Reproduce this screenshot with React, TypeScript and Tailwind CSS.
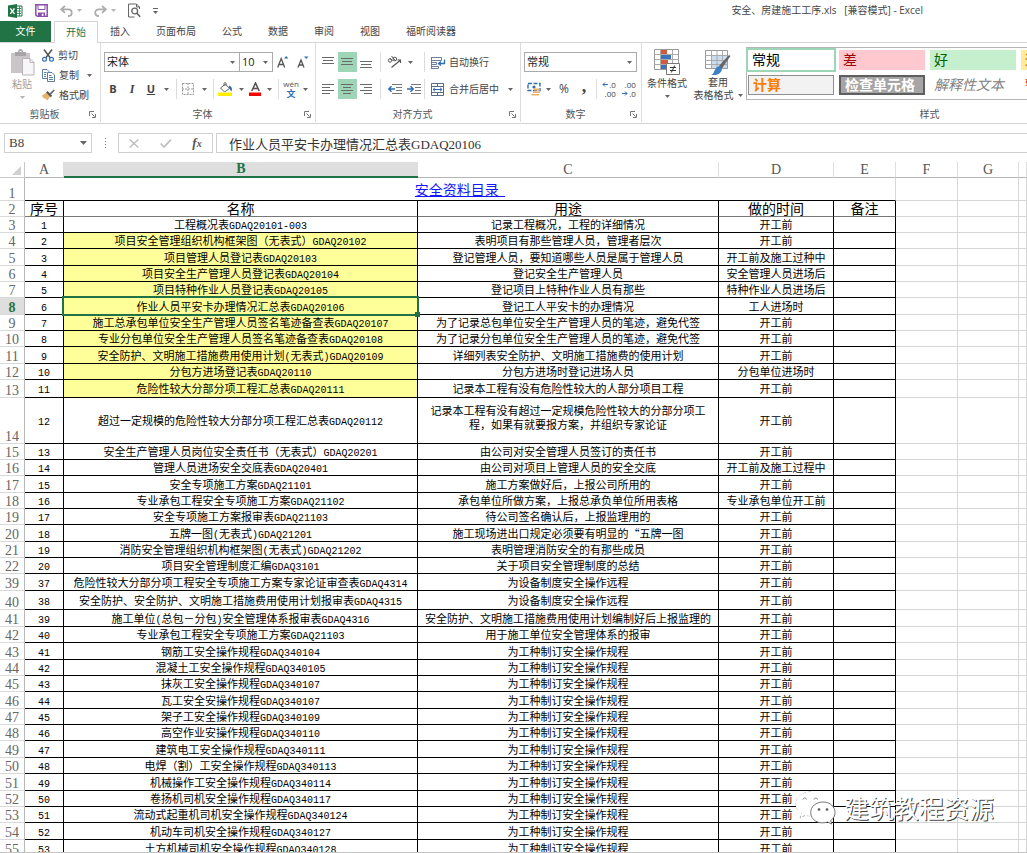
import React from "react";

type Purpose = string | string[];
type Row = {
  n: number;
  h: "a" | "b" | "c" | "d" | "e";
  no: string;
  name: string;
  use: Purpose;
  time: string;
  mark?: boolean;
};

const HEIGHTS = {
  a: "h-[16px]",
  b: "h-[17px]",
  c: "h-[18px]",
  d: "h-[46px]",
  e: "h-[19px]",
};

const CRAFT = "为工种制订安全操作规程";

const ROWS: Row[] = [
  { n: 3, h: "a", no: "1", name: "工程概况表GDAQ20101-003", use: "记录工程概况，工程的详细情况", time: "开工前" },
  { n: 4, h: "a", no: "2", name: "项目安全管理组织机构框架图（无表式）GDAQ20102", use: "表明项目有那些管理人员，管理者层次", time: "开工前", mark: true },
  { n: 5, h: "b", no: "3", name: "项目管理人员登记表GDAQ20103", use: "登记管理人员，要知道哪些人员是属于管理人员", time: "开工前及施工过种中", mark: true },
  { n: 6, h: "a", no: "4", name: "项目安全生产管理人员登记表GDAQ20104", use: "登记安全生产管理人员", time: "安全管理人员进场后", mark: true },
  { n: 7, h: "a", no: "5", name: "项目特种作业人员登记表GDAQ20105", use: "登记项目上特种作业人员有那些", time: "特种作业人员进场后", mark: true },
  { n: 8, h: "b", no: "6", name: "作业人员平安卡办理情况汇总表GDAQ20106", use: "登记工人平安卡的办理情况", time: "工人进场时", mark: true },
  { n: 9, h: "a", no: "7", name: "施工总承包单位安全生产管理人员签名笔迹备查表GDAQ20107", use: "为了记录总包单位安全生产管理人员的笔迹，避免代签", time: "开工前", mark: true },
  { n: 10, h: "a", no: "8", name: "专业分包单位安全生产管理人员签名笔迹备查表GDAQ20108", use: "为了记录分包单位安全生产管理人员的笔迹，避免代签", time: "开工前", mark: true },
  { n: 11, h: "b", no: "9", name: "安全防护、文明施工措施费用使用计划(无表式)GDAQ20109", use: "详细列表安全防护、文明施工措施费的使用计划", time: "开工前", mark: true },
  { n: 12, h: "a", no: "10", name: "分包方进场登记表GDAQ20110", use: "分包方进场时登记进场人员", time: "分包单位进场时", mark: true },
  { n: 13, h: "c", no: "11", name: "危险性较大分部分项工程汇总表GDAQ20111", use: "记录本工程有没有危险性较大的人部分项目工程", time: "开工前", mark: true },
  { n: 14, h: "d", no: "12", name: "超过一定规模的危险性较大分部分项工程汇总表GDAQ20112", use: ["记录本工程有没有超过一定规模危险性较大的分部分项工", "程，如果有就要报方案，并组织专家论证"], time: "开工前" },
  { n: 15, h: "a", no: "13", name: "安全生产管理人员岗位安全责任书（无表式）GDAQ20201", use: "由公司对安全管理人员签订的责任书", time: "开工前" },
  { n: 16, h: "a", no: "14", name: "管理人员进场安全交底表GDAQ20401", use: "由公司对项目上管理人员的安全交底", time: "开工前及施工过程中" },
  { n: 17, h: "b", no: "15", name: "安全专项施工方案GDAQ21101", use: "施工方案做好后，上报公司所用的", time: "开工前" },
  { n: 18, h: "a", no: "16", name: "专业承包工程安全专项施工方案GDAQ21102", use: "承包单位所做方案，上报总承负单位所用表格", time: "专业承包单位开工前" },
  { n: 19, h: "a", no: "17", name: "安全专项施工方案报审表GDAQ21103", use: "待公司签名确认后，上报监理用的", time: "开工前" },
  { n: 20, h: "b", no: "18", name: "五牌一图(无表式)GDAQ21201", use: "施工现场进出口规定必须要有明显的“五牌一图", time: "开工前" },
  { n: 21, h: "a", no: "19", name: "消防安全管理组织机构框架图(无表式)GDAQ21202", use: "表明管理消防安全的有那些成员", time: "开工前" },
  { n: 22, h: "a", no: "20", name: "项目安全管理制度汇编GDAQ3101", use: "关于项目安全管理制度的总结", time: "开工前" },
  { n: 39, h: "b", no: "37", name: "危险性较大分部分项工程安全专项施工方案专家论证审查表GDAQ4314", use: "为设备制度安全操作远程", time: "开工前" },
  { n: 40, h: "e", no: "38", name: "安全防护、安全防护、文明施工措施费用使用计划报审表GDAQ4315", use: "为设备制度安全操作远程", time: "开工前" },
  { n: 41, h: "b", no: "39", name: "施工单位(总包－分包)安全管理体系报审表GDAQ4316", use: "安全防护、文明施工措施费用使用计划编制好后上报监理的", time: "开工前" },
  { n: 42, h: "a", no: "40", name: "专业承包工程安全专项施工方案GDAQ21103", use: "用于施工单位安全管理体系的报审", time: "开工前" },
  { n: 43, h: "b", no: "41", name: "钢筋工安全操作规程GDAQ340104", use: CRAFT, time: "开工前" },
  { n: 44, h: "a", no: "42", name: "混凝土工安全操作规程GDAQ340105", use: CRAFT, time: "开工前" },
  { n: 45, h: "a", no: "43", name: "抹灰工安全操作规程GDAQ340107", use: CRAFT, time: "开工前" },
  { n: 46, h: "b", no: "44", name: "瓦工安全安操作规程GDAQ340107", use: CRAFT, time: "开工前" },
  { n: 47, h: "a", no: "45", name: "架子工安全操作规程GDAQ340109", use: CRAFT, time: "开工前" },
  { n: 48, h: "a", no: "46", name: "高空作业安操作规程GDAQ340110", use: CRAFT, time: "开工前" },
  { n: 49, h: "b", no: "47", name: "建筑电工安全操作规程GDAQ340111", use: CRAFT, time: "开工前" },
  { n: 50, h: "a", no: "48", name: "电焊（割）工安全操作规程GDAQ340113", use: CRAFT, time: "开工前" },
  { n: 51, h: "b", no: "49", name: "机械操作工安全操作规程GDAQ340114", use: CRAFT, time: "开工前" },
  { n: 52, h: "a", no: "50", name: "卷扬机司机安全操作规程GDAQ340117", use: CRAFT, time: "开工前" },
  { n: 53, h: "a", no: "51", name: "流动式起重机司机安全操作规程GDAQ340124", use: CRAFT, time: "开工前" },
  { n: 54, h: "b", no: "52", name: "机动车司机安全操作规程GDAQ340127", use: CRAFT, time: "开工前" },
  { n: 55, h: "b", no: "53", name: "土方机械司机安全操作规程GDAQ340128", use: CRAFT, time: "开工前" },
];

/* Latin runs are set in a narrower monospaced face than the Chinese text. */
function Mixed({ text }: { text: string }) {
  return (
    <>
      {text.split(/([\x21-\x7e]+)/).map((part, i) =>
        i % 2 ? (
          <span key={i} className="font-['Liberation_Mono',monospace] text-[10px] leading-none">{part}</span>
        ) : (
          part
        ),
      )}
    </>
  );
}

function Caret({ faint }: { faint?: boolean }) {
  return (
    <svg width="5" height="3" viewBox="0 0 5 3" className={faint ? "shrink-0 text-[#b5b5b5]" : "shrink-0 text-[#666]"}>
      <path d="M0 0h5L2.5 3z" fill="currentColor" />
    </svg>
  );
}

function Divider() {
  return <span className="block h-5 w-px shrink-0 bg-[#dcdcdc]" />;
}

function IconButton({ label, width, active, children }: { label: string; width: string; active?: boolean; children: React.ReactNode }) {
  return (
    <button aria-label={label} className={`flex h-5 shrink-0 items-center justify-center ${width} ${active ? "bg-[#9fd5b7]" : ""}`}>
      {children}
    </button>
  );
}

function Group({ title, width, launcher = true, children }: { title: string; width: string; launcher?: boolean; children: React.ReactNode }) {
  return (
    <section aria-label={title} className={`flex shrink-0 flex-col border-r border-[#dcdcdc] ${width}`}>
      <div className="flex-1">{children}</div>
      <div className="flex h-4 items-center pr-1">
        <span className="flex-1 text-center leading-4 text-[#555]">{title}</span>
        {launcher && (
          <button aria-label={`${title}设置`}>
            <svg width="7" height="7" viewBox="0 0 7 7" fill="none" stroke="#777">
              <path d="M.5 5V.5H5M2.5 2.5l3 3M6.5 3v3.5H3" />
            </svg>
          </button>
        )}
      </div>
    </section>
  );
}

function Lines({ rows }: { rows: [number, number, number][] }) {
  return (
    <svg width="13" height="14" viewBox="0 0 13 14" stroke="#6a6a6a">
      {rows.map(([y, x1, x2]) => (
        <path key={y} d={`M${x1} ${y + 0.5}H${x2}`} />
      ))}
    </svg>
  );
}

function QuickAccess() {
  return (
    <div className="flex items-center">
      <svg width="15" height="14" viewBox="0 0 15 14" className="mr-3">
        <path d="M8 2h6v10H8z" fill="#fff" stroke="#217346" />
        <path d="M9 4.5h4M9 7h4M9 9.5h4M11.5 2v10" stroke="#217346" strokeWidth=".8" />
        <path d="M0 1.5 9 0v14L0 12.500z" fill="#217346" />
        <path d="M2.300 4.300 6.500 9.800M6.500 4.300 2.300 9.800" stroke="#fff" strokeWidth="1.4" />
      </svg>
      <button aria-label="保存" className="mr-3">
        <svg width="13" height="13" viewBox="0 0 13 13">
          <path d="M.8.8h11.400v11.400H2.300L.8 10.800z" fill="#fff" stroke="#8a4fae" strokeWidth="1.500" />
          <path d="M3 1h7v4.500H3z" fill="#fff" stroke="#8a4fae" />
          <path d="M3 8.500h7V12H3z" fill="#8a4fae" />
          <path d="M6.800 9.700h1.700V12H6.800z" fill="#fff" />
        </svg>
      </button>
      <button aria-label="撤消" className="mr-3 flex items-center gap-1">
        <svg width="13" height="12" viewBox="0 0 13 12" fill="none" stroke="#ababab" strokeWidth="1.800">
          <path d="M5 .8 1.200 4.300 5 7.800M1.500 4.300H8c5 0 5 6.700 0 6.700" />
        </svg>
        <Caret faint />
      </button>
      <button aria-label="恢复" className="mr-3 flex items-center gap-1">
        <svg width="13" height="12" viewBox="0 0 13 12" fill="none" stroke="#ababab" strokeWidth="1.800">
          <path d="M8 .8l3.800 3.500L8 7.800M11.500 4.300H5C0 4.300 0 11 5 11" />
        </svg>
        <Caret faint />
      </button>
      <button aria-label="打印预览" className="mr-3">
        <svg width="13" height="15" viewBox="0 0 13 15" fill="none" stroke="#666">
          <path d="M11.500 6V4L8.500 1h-8v13h6M8.500 1v3h3" />
          <circle cx="6.700" cy="8" r="2.900" strokeWidth="1.300" />
          <path d="m8.900 10.200 3.300 3.600" strokeWidth="1.700" />
        </svg>
      </button>
      <button aria-label="自定义快速访问工具栏" className="flex flex-col items-center gap-0.5">
        <span className="h-px w-[5px] bg-[#666]" />
        <Caret />
      </button>
    </div>
  );
}

function SelectBox({ id, label, value, width }: { id: string; label: string; value: string; width: string }) {
  return (
    <div className={`relative h-5 border border-[#ababab] ${width}`}>
      <label htmlFor={id} className="sr-only">{label}</label>
      <select id={id} className="block h-full w-full appearance-none bg-white pl-0.5 text-[11px] leading-[18px] text-[#222] outline-none">
        <option>{value}</option>
      </select>
      <span className="pointer-events-none absolute inset-y-0 right-1 flex items-center"><Caret /></span>
    </div>
  );
}

function Clipboard() {
  return (
    <Group title="剪贴板" width="w-[101px]">
      <div className="flex pl-1.5 pt-0.5">
        <button className="flex w-8 flex-col items-center pt-1 text-[#9c9c9c]">
          <svg width="25" height="27" viewBox="0 0 25 27">
            <path d="M1 4h19v20H1z" fill="#c9c5c9" />
            <path d="M5 3h3c0-4 5-4 5 0h3v4H5z" fill="#a8a4a8" />
            <path d="M9.500 2.500h2" stroke="#fff" />
            <path d="M12.500 9.500h7.500l4 4v12.500H12.500z" fill="#f8f6f8" stroke="#b8b4b8" />
            <path d="M20 9.500v4h4" fill="none" stroke="#b8b4b8" />
          </svg>
          <span className="leading-4">粘贴</span>
          <span className="mt-1"><Caret faint /></span>
        </button>
        <div className="flex flex-col pl-1">
          <button className="flex h-5 items-center gap-1">
            <svg width="12" height="13" viewBox="0 0 12 13" fill="none">
              <path d="M2 .5 8.300 9M10 .5 3.700 9" stroke="#555" strokeWidth="1.500" />
              <circle cx="2.500" cy="10.200" r="1.900" stroke="#2f6eb5" strokeWidth="1.200" />
              <circle cx="9.500" cy="10.200" r="1.900" stroke="#2f6eb5" strokeWidth="1.200" />
            </svg>
            剪切
          </button>
          <button className="flex h-5 items-center gap-1">
            <svg width="13" height="13" viewBox="0 0 13 13" fill="#fff" stroke="#5b7ca5">
              <path d="M.5.500h4.500l2 2v7H.5z" />
              <path d="M2 3.500h2.500M2 5.500h2M2 7.500h2" />
              <path d="M5.500 3.500H10l2.500 2.500v6.500h-7z" />
              <path d="M7 6.500h2.500M7 8.500h4M7 10.500h4" />
            </svg>
            复制
            <span className="pl-1"><Caret /></span>
          </button>
          <button className="flex h-5 items-center gap-1">
            <svg width="13" height="12" viewBox="0 0 13 12">
              <path d="m0 6.500 4.500-3 4 4L5 11.800 3.800 9.500l-1 .8-.6-1.600-1.200.2z" fill="#e5b56c" />
              <path d="m4 3.500 1.600-1.400 4.600 4.700-1.500 1.400z" fill="#555" />
              <path d="m7.500 4.500 4.200-4 1.100 1.100-4 4.200z" fill="#666" />
            </svg>
            格式刷
          </button>
        </div>
      </div>
    </Group>
  );
}

function FontGroup() {
  return (
    <Group title="字体" width="w-[215px]">
      <div className="flex flex-col gap-[7px] pl-[3px] pt-[9px]">
        <div className="flex items-center">
          <SelectBox id="font-name" label="字体" value="宋体" width="w-[136px]" />
          <SelectBox id="font-size" label="字号" value="10" width="-ml-px w-[34px]" />
          <IconButton label="增大字号" width="w-5">
            <svg width="12" height="14" viewBox="0 0 12 14">
              <path d="m.7 12.500 3.500-9 3.500 9M2 9.500h4.400" fill="none" stroke="#555" strokeWidth="1.300" />
              <path d="M7 3.500 9.200 1l2.200 2.500z" fill="#2f6eb5" />
            </svg>
          </IconButton>
          <IconButton label="减小字号" width="w-5">
            <svg width="12" height="14" viewBox="0 0 12 14">
              <path d="m1 12.500 3-7.500 3 7.500M2 10h4" fill="none" stroke="#555" strokeWidth="1.300" />
              <path d="M7 1.500h4.400L9.200 4z" fill="#2f6eb5" />
            </svg>
          </IconButton>
        </div>
        <div className="flex items-center text-[#444]">
          <IconButton label="加粗" width="w-[18px]"><b className="font-['Open_Sans',sans-serif] text-[11px]">B</b></IconButton>
          <IconButton label="倾斜" width="w-5"><i className="font-['Liberation_Serif',serif] text-[12px] font-bold">I</i></IconButton>
          <IconButton label="下划线" width="w-[18px]"><u className="font-['Open_Sans',sans-serif] text-[11px] font-bold">U</u></IconButton>
          <IconButton label="下划线样式" width="w-3"><Caret /></IconButton>
          <span className="pl-1"><Divider /></span>
          <IconButton label="边框" width="w-[22px]">
            <svg width="12" height="12" viewBox="0 0 12 12" fill="none" stroke="#999">
              <path d="M.5.500h11v11H.5zM6 0v12M0 6h12" strokeDasharray="2 1" />
            </svg>
          </IconButton>
          <IconButton label="边框样式" width="w-2.5"><Caret /></IconButton>
          <span className="pl-1"><Divider /></span>
          <IconButton label="填充颜色" width="w-[22px]">
            <svg width="15" height="14" viewBox="0 0 15 14">
              <path d="m2.500 6 5-4 4 4.500-5 3.500z" fill="#fff" stroke="#666" />
              <path d="M6 4V1.500C6 .3 8 .3 8 1.500V4" fill="none" stroke="#666" />
              <path d="M11 3.500c3 1 3.500 3.500 2.500 6-1.500-1-1.500-3-2.500-3.500z" fill="#2f6eb5" />
              <path d="M0 10.500h14V14H0z" fill="#ffee00" />
            </svg>
          </IconButton>
          <IconButton label="选择填充颜色" width="w-2.5"><Caret /></IconButton>
          <IconButton label="字体颜色" width="w-[18px]">
            <svg width="13" height="14" viewBox="0 0 13 14">
              <path d="m2.800 9 3.700-8 3.700 8M4.200 6.500h4.600" fill="none" stroke="#555" strokeWidth="1.600" />
              <path d="M0 10.500h12V14H0z" fill="#f00" />
            </svg>
          </IconButton>
          <IconButton label="选择字体颜色" width="w-2.5"><Caret /></IconButton>
          <span className="pl-1"><Divider /></span>
          <IconButton label="拼音指南" width="w-6">
            <span className="flex flex-col items-center text-[#555]">
              <span className="font-['Open_Sans',sans-serif] text-[8px] leading-[8px]">wén</span>
              <b className="text-[9px] leading-[11px] text-[#2f6eb5]">文</b>
            </span>
          </IconButton>
          <Caret />
        </div>
      </div>
    </Group>
  );
}

function AlignGroup() {
  return (
    <Group title="对齐方式" width="w-[205px]">
      <div className="flex flex-col gap-[7px] pl-[3px] pt-[9px]">
        <div className="flex items-center">
          <IconButton label="顶端对齐" width="w-[19px]"><Lines rows={[[2, 0, 12], [5, 1, 11], [8, 0, 12]]} /></IconButton>
          <IconButton label="垂直居中" width="w-[19px]" active><Lines rows={[[3, 0, 12], [6, 1, 11], [9, 0, 12]]} /></IconButton>
          <IconButton label="底端对齐" width="w-[19px]"><Lines rows={[[6, 0, 12], [9, 1, 11], [12, 0, 12]]} /></IconButton>
          <span className="px-1"><Divider /></span>
          <IconButton label="方向" width="w-[19px]">
            <svg width="15" height="14" viewBox="0 0 15 14" fill="none" stroke="#555">
              <circle cx="3" cy="5.500" r="1.700" />
              <path d="m3.200 3.200 2.500 3M4.500 1l4 5" />
              <circle cx="7.800" cy="4" r="1.800" />
              <path d="M4.500 12.500 13 5.500M13.500 8V5h-3" strokeWidth="1.200" />
            </svg>
          </IconButton>
          <IconButton label="方向选项" width="w-3"><Caret /></IconButton>
          <span className="pl-2"><Divider /></span>
          <button className="flex h-5 items-center gap-[3px] pl-1.5">
            <svg width="15" height="13" viewBox="0 0 15 13" fill="none">
              <path d="M.5 1.500h10v3H.5zM.5 6.500h5v2h-5zM.5 10.500h7v2h-7zM.5 1v12" stroke="#6d7f94" />
              <path d="M13.500 3.500v4H8M10 5.500l-2.500 2L10 9.500" stroke="#2f6eb5" strokeWidth="1.300" />
            </svg>
            自动换行
          </button>
        </div>
        <div className="flex items-center">
          <IconButton label="左对齐" width="w-[19px]"><Lines rows={[[2, 0, 12], [5, 0, 8], [8, 0, 12], [11, 0, 8]]} /></IconButton>
          <IconButton label="居中" width="w-[19px]" active><Lines rows={[[2, 0, 12], [5, 2, 10], [8, 0, 12], [11, 2, 10]]} /></IconButton>
          <IconButton label="右对齐" width="w-[19px]"><Lines rows={[[2, 0, 12], [5, 4, 12], [8, 0, 12], [11, 4, 12]]} /></IconButton>
          <span className="px-1"><Divider /></span>
          <IconButton label="减少缩进量" width="w-[19px]">
            <svg width="14" height="12" viewBox="0 0 14 12" fill="none">
              <path d="M4 1.500h10M8 4.500h6M8 7.500h6M4 10.500h10" stroke="#777" />
              <path d="M7 6H1M3.500 3.300.8 6l2.700 2.700" stroke="#2f6eb5" strokeWidth="1.500" />
            </svg>
          </IconButton>
          <IconButton label="增加缩进量" width="w-[19px]">
            <svg width="14" height="12" viewBox="0 0 14 12" fill="none">
              <path d="M4 1.500h10M8 4.500h6M8 7.500h6M4 10.500h10" stroke="#777" />
              <path d="M0 6h6M3.500 3.300 6.200 6 3.500 8.700" stroke="#2f6eb5" strokeWidth="1.500" />
            </svg>
          </IconButton>
          <span className="pl-px"><Divider /></span>
          <button className="flex h-5 items-center gap-[3px] pl-1.5">
            <svg width="15" height="13" viewBox="0 0 15 13" fill="none">
              <path d="M.5.500h12v12H.5zM.5 3.500h12M.5 9.500h12M6.500.5v3M6.500 9.500v3" stroke="#5a6b80" />
              <path d="M2 6.500h9M4 4.800 2 6.500l2 1.700M9 4.800l2 1.700-2 1.700" stroke="#2f6eb5" />
            </svg>
            合并后居中
            <span className="pl-1.5"><Caret /></span>
          </button>
        </div>
      </div>
    </Group>
  );
}

function DecimalIcon({ more }: { more?: boolean }) {
  const arrow = (
    <svg width="6" height="5" viewBox="0 0 6 5" fill="none" stroke="#2f6eb5">
      <path d={more ? "M6 2.500H1M3 .5 1 2.500l2 2" : "M0 2.500h5M3 .500l2 2-2 2"} />
    </svg>
  );
  return (
    <span className="flex flex-col font-['Open_Sans',sans-serif] text-[8px] leading-[9px] text-[#444]">
      <span className="flex items-center justify-end gap-px">
        {more && arrow}
        {more ? ".0" : ".00"}
      </span>
      <span className="flex items-center justify-end gap-px">
        {!more && arrow}
        {more ? ".00" : ".0"}
      </span>
    </span>
  );
}

function NumberGroup() {
  return (
    <Group title="数字" width="w-[121px]">
      <div className="flex flex-col gap-[7px] pl-[3px] pt-[9px]">
        <SelectBox id="number-format" label="数字格式" value="常规" width="w-[113px]" />
        <div className="flex items-center">
          <IconButton label="会计数字格式" width="w-[20px]">
            <svg width="14" height="14" viewBox="0 0 14 14">
              <path d="M1 1.500h12v7H1z" fill="#fff" stroke="#2f6eb5" strokeWidth="1.400" strokeDasharray="4 1.500" />
              <circle cx="7" cy="5" r="1.600" fill="#2f6eb5" />
              <path d="M7 6.500h6v2H7zM6 9.500h7v1.500H6zM4.500 12H12v1.500H4.500z" fill="#edb066" />
            </svg>
          </IconButton>
          <IconButton label="货币选项" width="w-2"><Caret /></IconButton>
          <IconButton label="百分比样式" width="w-6"><span className="font-['Open_Sans',sans-serif] text-[12px] text-[#444]">%</span></IconButton>
          <IconButton label="千位分隔样式" width="w-4"><b className="pb-1.5 font-['Liberation_Serif',serif] text-[18px] leading-3 text-[#444]">,</b></IconButton>
          <span className="pl-1"><Divider /></span>
          <IconButton label="增加小数位数" width="w-6"><DecimalIcon more /></IconButton>
          <IconButton label="减少小数位数" width="w-4"><DecimalIcon /></IconButton>
        </div>
      </div>
    </Group>
  );
}

function StylesGroup() {
  const cell = "h-5 px-1 text-left text-[14px] leading-[18px]";
  return (
    <Group title="样式" width="w-[580px]" launcher={false}>
      <div className="flex pl-1 pt-1">
        <button className="flex w-[42px] flex-col items-center pt-0.5">
          <svg width="26" height="27" viewBox="0 0 26 27">
            <path d="M.5.500h24v20H.5z" fill="#fff" stroke="#999" />
            <path d="M.5 5.500h24M.5 10.500h24M.5 15.500h24M6.500.5v20M18.500.5v20" stroke="#aaa" />
            <path d="M7 1h6v4H7zM7 11h7v4H7z" fill="#d9573a" />
            <path d="M7 6h10v4H7zM7 16h5v4H7z" fill="#3d73bd" />
            <path d="M12.500 14.500h13v11h-13z" fill="#fff" stroke="#777" />
            <path d="M16 18.500h6M16 21.500h6M20.700 16.500l-3.400 7" stroke="#333" />
          </svg>
          <span className="whitespace-nowrap leading-[15px]">条件格式</span>
          <span className="mt-1"><Caret /></span>
        </button>
        <button className="flex w-[56px] flex-col items-center pl-1 pt-0.5">
          <svg width="26" height="27" viewBox="0 0 26 27">
            <path d="M.5 1.500h22v18H.5z" fill="#fff" stroke="#999" />
            <path d="M6 7h16v12H6z" fill="#c9dcf1" />
            <path d="M.5 6.500h22M.5 11.500h22M.5 15.500h22M6.500 1.500v18M12 1.500v18M17.500 1.500v18" stroke="#aaa" />
            <path d="m25.500 7-9 13-3-2.500L24 6z" fill="#666" />
            <path d="M13.500 17.500c2.500 0 4 2 3 4.500-2 3.500-6 4.500-10 4 3-1.500 3-7.500 7-8.500z" fill="#3d80c5" />
          </svg>
          <span className="leading-[13px]">套用</span>
          <span className="flex items-center gap-1 whitespace-nowrap leading-[13px]">表格格式<Caret /></span>
        </button>
        <div className="ml-0.5 h-[53px] flex-1 border border-r-0 border-[#b5b5b5] pl-px pt-0.5">
          <div className="grid auto-cols-[86px] grid-flow-col grid-rows-2 gap-[5px]">
            <button className={`${cell} bg-white text-black ring-2 ring-[#9fd5b7]`}>常规</button>
            <button className={`${cell} border border-[#8f8f8f] bg-[#f2f2f2] font-bold text-[#fa7d00]`}><span className="block leading-4">计算</span></button>
            <button className={`${cell} bg-[#ffc7ce] text-[#9c0006]`}>差</button>
            <button className={`${cell} border-2 border-[#5f5f5f] bg-[#a5a5a5] font-bold text-white`}><span className="block leading-[14px]">检查单元格</span></button>
            <button className={`${cell} bg-[#c6efce] text-[#006100]`}>好</button>
            <button className={`${cell} italic text-[#7f7f7f]`}>解释性文本</button>
            <button className={`${cell} bg-[#ffeb9c] text-[#9c6500]`}>适中</button>
            <button className={`${cell} text-[#ff0000]`}>警告文本</button>
          </div>
        </div>
      </div>
    </Group>
  );
}

function FormulaBar() {
  return (
    <div className="flex h-[38px] shrink-0 items-center pl-1">
      <div className="flex h-5 w-[88px] items-center border border-[#d0d0d0] pr-1">
        <input aria-label="名称框" defaultValue="B8" className="w-full min-w-0 bg-transparent pl-1 font-['Liberation_Serif',serif] text-[13px] text-[#444] outline-none" />
        <svg width="7" height="4" viewBox="0 0 7 4" className="shrink-0"><path d="M0 0h7L3.500 4z" fill="#666" /></svg>
      </div>
      <div className="flex w-[26px] flex-col items-center gap-0.5">
        <span className="size-px bg-[#777]" />
        <span className="size-px bg-[#777]" />
        <span className="size-px bg-[#777]" />
        <span className="size-px bg-[#777]" />
      </div>
      <div className="flex h-5 w-[95px] items-center justify-around border border-[#d0d0d0]">
        <button aria-label="取消">
          <svg width="10" height="9" viewBox="0 0 10 9" stroke="#bdbdbd" strokeWidth="1.400"><path d="m.7.500 8.600 8M9.300.5.700 8.500" /></svg>
        </button>
        <button aria-label="输入">
          <svg width="12" height="9" viewBox="0 0 12 9" fill="none" stroke="#bdbdbd" strokeWidth="1.700"><path d="M.7 4.500 4 8 11 .7" /></svg>
        </button>
        <button aria-label="插入函数" className="font-['Liberation_Serif',serif] text-[13px] font-bold italic text-[#555]">
          f<span className="text-[10px]">x</span>
        </button>
      </div>
      <input
        aria-label="编辑栏"
        defaultValue="作业人员平安卡办理情况汇总表GDAQ20106"
        className="ml-[3px] h-5 min-w-0 flex-1 border border-r-0 border-[#d0d0d0] pl-3 font-['Liberation_Serif','Noto_Sans_CJK_SC',sans-serif] text-[13px] text-[#333] outline-none"
      />
    </div>
  );
}

const COLUMNS = ["A", "B", "C", "D", "E", "F", "G", ""];
const DATA = "border-b border-r border-black p-0 text-center leading-[15px] whitespace-nowrap";
const GRID = "border-b border-r border-[#d6d6d6] p-0";
const HEAD = "border-b border-r border-b-[#d9d9d9] border-r-[#b8b8b8] p-0 text-center align-bottom font-['Liberation_Serif',serif] text-[14px] leading-[13px]";

function Blank() {
  return (
    <>
      <td className={GRID} />
      <td className={GRID} />
      <td className={GRID} />
    </>
  );
}

function Sheet() {
  return (
    <table className="w-full table-fixed border-separate border-spacing-0 text-[11px] leading-[15px] text-black">
      <colgroup>
        <col className="w-[25px]" />
        <col className="w-[39px]" />
        <col className="w-[354px]" />
        <col className="w-[301px]" />
        <col className="w-[115px]" />
        <col className="w-[62px]" />
        <col className="w-[62px]" />
        <col className="w-[61px]" />
        <col />
      </colgroup>
      <thead>
        <tr className="h-[16px] font-['Liberation_Serif',serif] text-[14px]">
          <th className="border-b border-r border-[#c8c8c8] p-0 align-bottom">
            <svg width="9" height="9" viewBox="0 0 9 9" className="mb-0.5 ml-3"><path d="M9 0v9H0z" fill="#d0d0d0" /></svg>
          </th>
          {COLUMNS.map((c, i) => (
            <th
              key={i}
              scope="col"
              className={
                c === "B"
                  ? "border-b-2 border-[#217346] bg-[#dedede] p-0 font-bold leading-[14px] text-[#217346]"
                  : "border-b border-r border-b-[#b5b5b5] border-r-[#dedede] p-0 font-normal leading-[15px] text-[#555]"
              }
            >
              {c}
            </th>
          ))}
        </tr>
      </thead>
      <tbody>
        <tr className="h-[23px]">
          <th scope="row" className={`${HEAD} font-normal text-[#666]`}>1</th>
          <td colSpan={5} className="border-b border-r border-b-black border-r-[#d6d6d6] p-0 text-center text-[14px] leading-[22px]">
            <a href="#catalog" className="whitespace-pre text-[#1414ff] underline">{"安全资料目录  "}</a>
          </td>
          <Blank />
        </tr>
        <tr className="h-[16px] text-[14px]">
          <th scope="row" className={`${HEAD} font-normal text-[#666]`}>2</th>
          {["序号", "名称", "用途", "做的时间", "备注"].map((t) => (
            <td key={t} className="border-b border-r border-b-[#777] border-r-black p-0 text-center leading-[15px]">{t}</td>
          ))}
          <Blank />
        </tr>
        {ROWS.map((r) => {
          const active = r.n === 8;
          return (
            <tr key={r.n} className={HEIGHTS[r.h]}>
              <th scope="row" className={`${HEAD} ${active ? "bg-[#dedede] font-bold text-[#217346]" : "font-normal text-[#666]"}`}>{r.n}</th>
              <td className={DATA}><Mixed text={r.no} /></td>
              <td className={`${DATA} ${r.mark ? "bg-[#ffff99]" : ""} ${active ? "relative" : ""}`}>
                <Mixed text={r.name} />
                {active && (
                  <span className="absolute -inset-x-0.5 -bottom-0.5 -top-0.5 border-2 border-[#217346]">
                    <span className="absolute -bottom-[3px] -right-[3px] size-[5px] bg-[#217346]" />
                  </span>
                )}
              </td>
              <td className={DATA}>
                {Array.isArray(r.use) ? (
                  <span className="block pb-2 leading-[14px]">{r.use[0]}<br />{r.use[1]}</span>
                ) : (
                  <Mixed text={r.use} />
                )}
              </td>
              <td className={DATA}>{r.time}</td>
              <td className={DATA} />
              <Blank />
            </tr>
          );
        })}
      </tbody>
    </table>
  );
}

function Watermark() {
  return (
    <div className="pointer-events-none absolute bottom-[28px] right-[33px] flex items-center gap-2">
      <svg width="41" height="34" viewBox="0 0 41 34">
        <path d="M16 1C7 1 1 6.500 1 13c0 4 2 7 5.500 9.300L5 27l5.500-2.800c2 .6 4 .8 6.500.7z" fill="#fff" stroke="#999" strokeWidth=".8" strokeDasharray="3 2" />
        <path d="M16 1c8 0 13 4.500 14 10-9 0-15 6-13 14C7 25 1 20 1 13S7 1 16 1z" fill="#fff" />
        <path d="M8 8.500c.5-2 3-2 3.500 0M19 8.500c.5-2 3-2 3.500 0" fill="none" stroke="#777" />
        <path d="M28 11c7 0 12 4.500 12 10.500 0 3.500-1.500 6-4.300 8l1 3.500-4-2c-9 3-17-2-17-9.500C15.700 15.500 21 11 28 11z" fill="#fff" stroke="#666" strokeWidth=".9" />
        <circle cx="24" cy="18.500" r="1.300" fill="#555" />
        <circle cx="32" cy="18.500" r="1.300" fill="#555" />
      </svg>
      <span className="text-[25px] leading-8 text-white [text-shadow:1px_1px_0_#444]">建筑教程资源</span>
    </div>
  );
}

export default function App() {
  const tabs = ["插入", "页面布局", "公式", "数据", "审阅", "视图", "福昕阅读器"];
  return (
    <div lang="zh-CN" className="relative flex h-screen flex-col overflow-hidden bg-white font-['Open_Sans','Noto_Sans_CJK_SC',sans-serif] text-[10px] text-[#444]">
      <header className="flex h-[21px] shrink-0 items-center justify-between pl-2 pr-[104px]">
        <QuickAccess />
        <h1 className="whitespace-pre text-[#444]">安全、房建施工工序.xls   [兼容模式] - Excel</h1>
      </header>
      <nav className="flex h-[22px] shrink-0 border-b border-[#d4d4d4]">
        <button className="w-[51px] bg-[#217346] text-white">文件</button>
        <button className="-mb-px ml-[3px] w-11 border border-b-0 border-[#d4d4d4] bg-white text-[#217346]">开始</button>
        <div className="flex gap-[26px] pl-3">
          {tabs.map((t) => (
            <button key={t}>{t}</button>
          ))}
        </div>
      </nav>
      <div className="flex h-[81px] shrink-0 overflow-hidden border-b border-[#d4d4d4] pb-px">
        <Clipboard />
        <FontGroup />
        <AlignGroup />
        <NumberGroup />
        <StylesGroup />
      </div>
      <FormulaBar />
      <main className="min-h-0 flex-1 overflow-hidden font-['Noto_Sans_CJK_SC',sans-serif]">
        <Sheet />
      </main>
      <div className="h-px shrink-0 bg-[#c4c4c4]" />
      <Watermark />
    </div>
  );
}
